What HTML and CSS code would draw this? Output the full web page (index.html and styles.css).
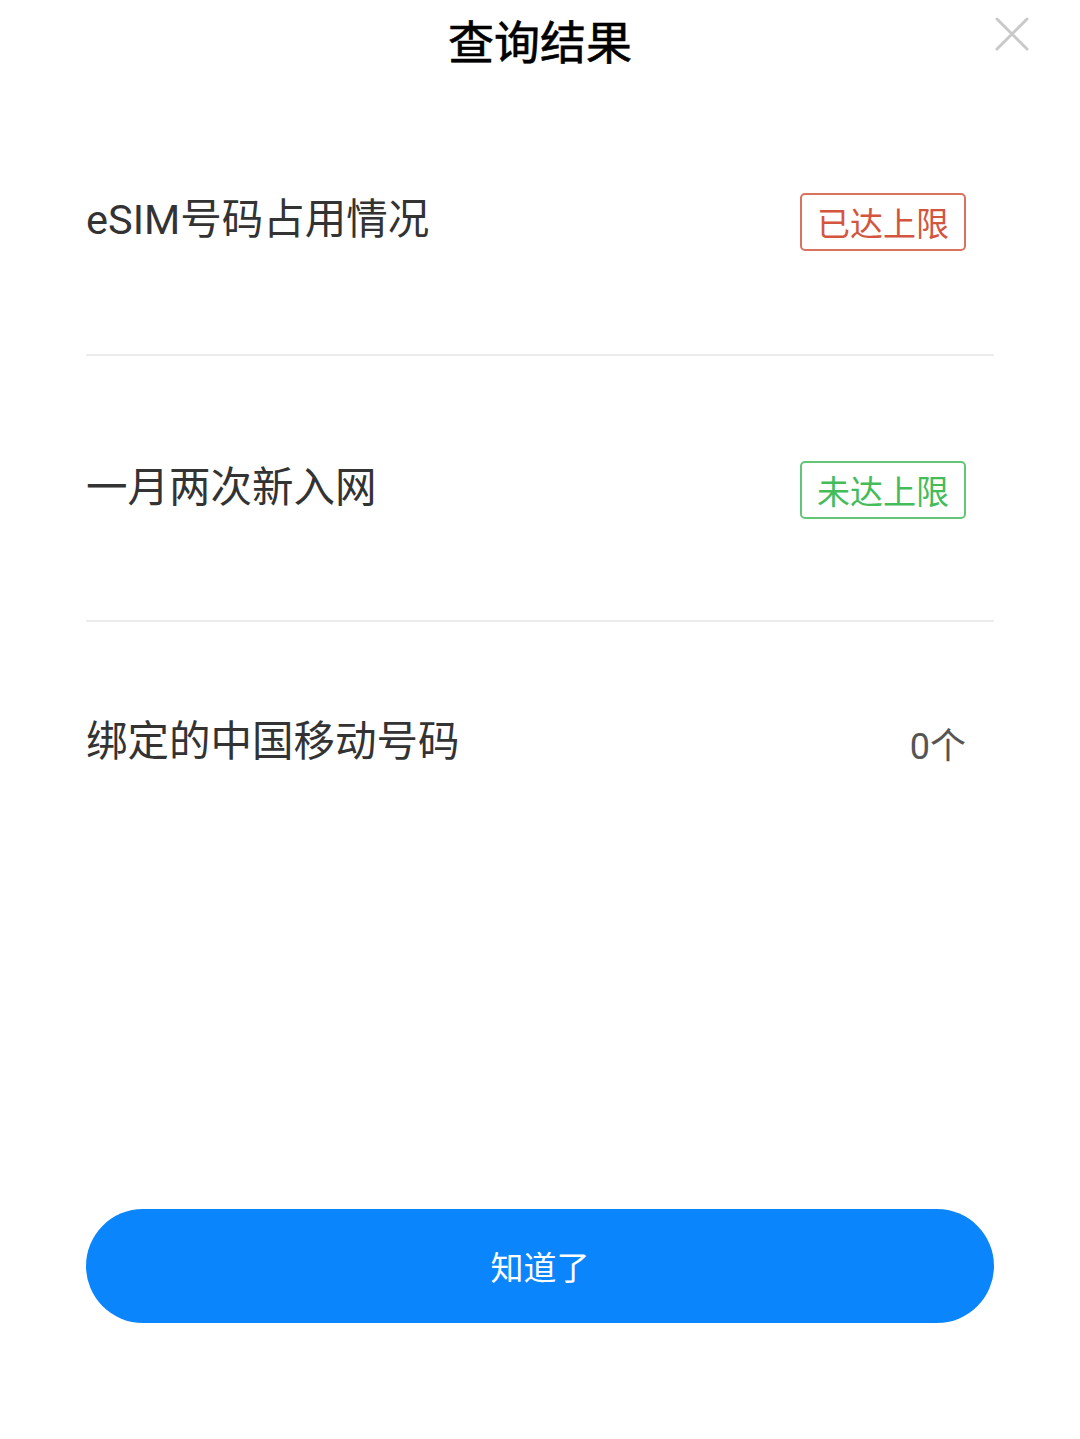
FILE: index.html
```html
<!DOCTYPE html>
<html lang="zh-CN">
<head>
    <meta charset="UTF-8">
    <meta name="viewport" content="width=device-width, initial-scale=1.0">
    <title>查询结果</title>
    <link rel="stylesheet" href="styles.css">
</head>
<body>
    <div class="sheet">
        <header class="sheet-head">
            <span></span>
            <h1>查询结果</h1>
            <button class="close" aria-label="关闭">
                <svg width="36" height="36" viewBox="0 0 36 36">
                    <path d="M3 3 L33 33 M33 3 L3 33" stroke="#c9c9c9" stroke-width="3" stroke-linecap="round" fill="none"/>
                </svg>
            </button>
        </header>

        <div class="result-list">
            <div class="result-row">
                <span class="label">eSIM号码占用情况</span>
                <span class="badge badge-full">已达上限</span>
            </div>
            <div class="result-row">
                <span class="label">一月两次新入网</span>
                <span class="badge badge-ok">未达上限</span>
            </div>
            <div class="result-row last">
                <span class="label">绑定的中国移动号码</span>
                <span class="count">0个</span>
            </div>
        </div>

        <button class="confirm">知道了</button>
    </div>
</body>
</html>
```

FILE: styles.css
```css
body {
    margin: 0;
    padding: 0;
    background-color: #fff;
    font-family: Roboto, "Noto Sans CJK SC", sans-serif;
}

.sheet {
    width: 1080px;
    height: 1439px;
    padding: 0 86px;
    box-sizing: border-box;
}

.sheet-head {
    height: 90px;
    display: grid;
    grid-template-columns: 1fr auto 1fr;
    align-items: start;
    margin: 0 -86px;
}

.sheet-head h1 {
    margin: 20px 0 0;
    font-size: 46px;
    font-weight: 400;
    color: #000;
    line-height: 46px;
    -webkit-text-stroke: 0.6px #000;
}

.close {
    justify-self: end;
    margin: 16px 50px 0 0;
    padding: 0;
    border: none;
    background: none;
    width: 36px;
    height: 36px;
}

.result-row {
    height: 266px;
    box-sizing: border-box;
    display: flex;
    align-items: center;
    justify-content: space-between;
    border-bottom: 2px solid #ececec;
    padding-right: 28px;
}

.result-row:first-child {
    padding-bottom: 4px;
}

.result-row.last {
    height: 238px;
    border-bottom: none;
    padding-top: 2px;
}

.label {
    font-size: 41.5px;
    color: #333;
    line-height: 1;
}

.badge {
    width: 166px;
    height: 58px;
    box-sizing: border-box;
    display: flex;
    align-items: center;
    justify-content: center;
    font-size: 33px;
    border: 2px solid;
    border-radius: 5px;
    margin-top: 4px;
}

.badge-full {
    color: #d4553e;
    border-color: #d8735f;
}

.badge-ok {
    color: #45bc5a;
    border-color: #63c676;
}

.count {
    font-size: 36px;
    color: #555;
    margin-top: 2px;
}

.confirm {
    display: block;
    width: 908px;
    height: 114px;
    margin-top: 349px;
    border: none;
    border-radius: 57px;
    background-color: #0b85fb;
    color: #fff;
    font-family: inherit;
    font-size: 33px;
}
```
